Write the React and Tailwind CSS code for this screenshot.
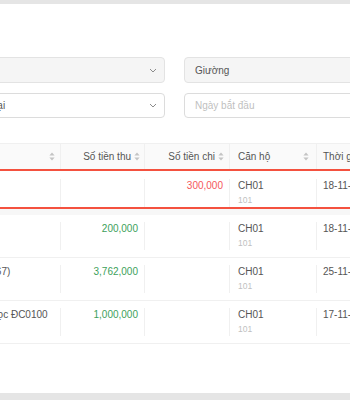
import React from "react";

const SortIcon = () => (
  <svg width="6" height="9" viewBox="0 0 6 9" className="shrink-0">
    <path d="M3 0.5L5.6 3.6H0.4Z" fill="#c4c4c4" />
    <path d="M3 8.5L0.4 5.4H5.6Z" fill="#c4c4c4" />
  </svg>
);

const Chevron = () => (
  <svg width="8" height="5" viewBox="0 0 8 5" className="shrink-0">
    <path d="M1 1L4 4L7 1" fill="none" stroke="#8c8c8c" strokeWidth="1" />
  </svg>
);

const cols = "grid grid-cols-[161px_84px_85px_87px_120px]";

const rows = [
  { name: "Chi tiền sửa chữa", shift: "", thu: "", chi: "300,000", date: "18-11-2024", hl: true },
  { name: "Thu tiền phòng", shift: "", thu: "200,000", chi: "", date: "18-11-2024" },
  { name: "Thu tiền hóa đơn (HĐ000067)", shift: "-ml-[31px]", thu: "3,762,000", chi: "", date: "25-11-2024" },
  { name: "Thu tiền đặt cọc ĐC0100", shift: "ml-[29px]", thu: "1,000,000", chi: "", date: "17-11-2024" },
];

function Row({ r }) {
  const cell = "border-r border-[#f0f0f0] px-[8px]";
  const num = "border-r border-[#f0f0f0] pl-[8px] pr-[6px] text-right text-[10px] leading-[14px]";
  return (
    <div
      className={
        cols +
        (r.hl
          ? " border-t-2 border-b-2 border-[#f4513f] pt-[8px] pb-0"
          : " border-b border-[#f0f0f0] pt-[7px] pb-[7px]")
      }
    >
      <div className={cell + " text-[10px] leading-[14px] text-[#555] whitespace-nowrap overflow-hidden"}>
        <span className={"inline-block " + r.shift}>{r.name}</span>
      </div>
      <div className={num + " text-[#3d9f5b]"}>{r.thu}</div>
      <div className={num + " text-[#f5575b]"}>{r.chi}</div>
      <div className={cell + " flex flex-col"}>
        <span className="text-[10px] leading-[14px] text-[#555]">CH01</span>
        <span className="text-[8.5px] leading-[14px] text-[#bfbfbf]">101</span>
      </div>
      <div className="px-[6px] text-[10px] leading-[14px] text-[#555] whitespace-nowrap">{r.date}</div>
    </div>
  );
}

export default function App() {
  return (
    <div className="w-[350px] h-[400px] overflow-hidden bg-white flex flex-col font-['Liberation_Sans',Arial,sans-serif]">
      <div className="h-[4px] bg-[#e5e5e5] shrink-0" />
      <div className="flex-1 flex flex-col">
        <div className="mt-[53px] -ml-[100px] grid grid-cols-[265px_266px] gap-x-[19px] gap-y-[10px]">
          <div className="h-[26px] rounded-[4px] border border-[#e3e3e3] bg-[#f5f5f5] flex items-center justify-end pr-[7px]">
            <Chevron />
          </div>
          <div className="h-[26px] rounded-[4px] border border-[#e3e3e3] bg-[#f5f5f5] flex items-center px-[10px] text-[10px] text-[#555]">
            Giường
          </div>
          <div className="h-[25px] rounded-[4px] border border-[#dcdcdc] bg-white flex items-center justify-between pl-[10px] pr-[7px]">
            <span className="text-[10px] text-[#555] pl-[48px]">Tất cả loại</span>
            <Chevron />
          </div>
          <div className="h-[25px] rounded-[4px] border border-[#dcdcdc] bg-white flex items-center px-[10px] text-[10px] text-[#bfbfbf]">
            Ngày bắt đầu
          </div>
        </div>

        <div className="mt-[25px] -ml-[100px] flex flex-col">
          <div className={cols + " h-[26px] border-t border-[#f0f0f0] bg-[#fafafa]"}>
            <div className="border-r border-[#f0f0f0] flex items-center justify-between pl-[8px] pr-[5px] text-[10px] text-[#555]">
              <span>Nội dung</span>
              <SortIcon />
            </div>
            <div className="border-r border-[#f0f0f0] flex items-center justify-end gap-[3px] pr-[4px] text-[10px] text-[#555]">
              <span>Số tiền thu</span>
              <SortIcon />
            </div>
            <div className="border-r border-[#f0f0f0] flex items-center justify-end gap-[3px] pr-[5px] text-[10px] text-[#555]">
              <span>Số tiền chi</span>
              <SortIcon />
            </div>
            <div className="border-r border-[#f0f0f0] flex items-center justify-between pl-[8px] pr-[7px] text-[10px] text-[#555]">
              <span>Căn hộ</span>
              <SortIcon />
            </div>
            <div className="flex items-center px-[6px] text-[10px] text-[#555] whitespace-nowrap">
              Thời gian
            </div>
          </div>
          <Row r={rows[0]} />
          <div className="h-[6px] bg-[#f7f7f7]" />
          <Row r={rows[1]} />
          <Row r={rows[2]} />
          <Row r={rows[3]} />
        </div>
      </div>
      <div className="h-[7px] bg-[#e5e5e5] shrink-0" />
    </div>
  );
}
